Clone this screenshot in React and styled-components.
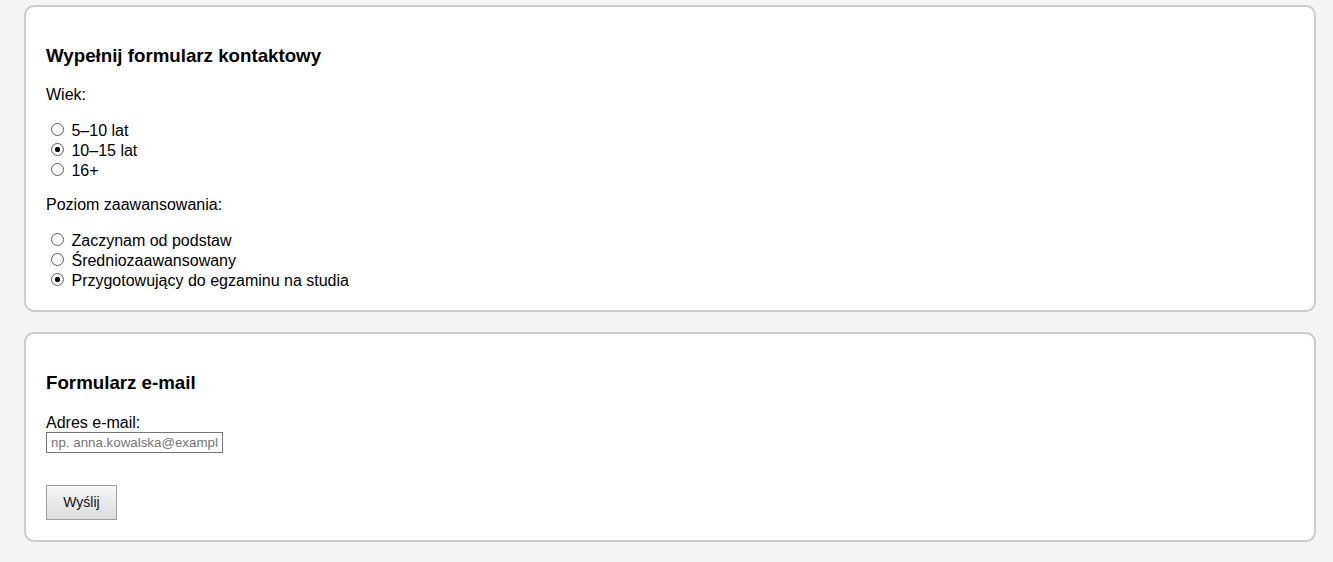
import React from 'react'
import styled, { createGlobalStyle } from 'styled-components'

const Global = createGlobalStyle`
body {
    margin: 0;
    background: #f5f5f5;
    font-family: "Liberation Sans", Arial, sans-serif;
    color: #000;
}
`

const Page = styled.div`
display: flex;
flex-direction: column;
gap: 20px;
padding: 5px 17px 21px 24px;
`

const Card = styled.section`
background: #fff;
border: 2px solid #cccccc;
border-radius: 10px;
padding: 20px;
`

const Heading = styled.h3`
font-size: 18.72px;
font-weight: bold;
margin: 18px 0 19.4px;
`

const Label = styled.p`
font-size: 16px;
margin: 16px 0;
`

const Options = styled.div`
font-size: 16px;
`

const Option = styled.label`
display: block;

input {
    appearance: none;
    box-sizing: border-box;
    width: 13px;
    height: 13px;
    margin: 3px 3px 0 5px;
    border: 1px solid #5a5a5a;
    border-radius: 50%;
    background: #fff;
}

input:checked {
    background: radial-gradient(circle, #111 0 2.4px, #fff 3px);
}
`

const Field = styled.label`
display: block;
font-size: 16px;
margin-bottom: 32px;
`

const Input = styled.input`
display: block;
box-sizing: border-box;
width: 177px;
height: 21px;
padding: 1px 4px;
border: 1px solid #767676;
font-family: "Liberation Sans", Arial, sans-serif;
font-size: 13.33px;

::placeholder {
    color: #8a8a8a;
}
`

const Button = styled.button`
display: block;
box-sizing: border-box;
width: 71px;
height: 35px;
border: 1px solid #a0a0a0;
background: linear-gradient(to bottom, #f7f7f7, #dcdcdc);
font-family: "Liberation Sans", Arial, sans-serif;
font-size: 14px;
color: #111;
`

const RadioGroup = ({ name, options, checked }) => (
    <Options>
        {options.map(opt => (
            <Option key={opt}>
                <input type="radio" name={name} defaultChecked={opt === checked} /> {opt}
            </Option>
        ))}
    </Options>
)

const App = () => {
    return (
        <Page>
            <Global />
            <Card>
                <Heading>Wypełnij formularz kontaktowy</Heading>
                <Label>Wiek:</Label>
                <RadioGroup name="wiek" options={['5–10 lat', '10–15 lat', '16+']} checked="10–15 lat" />
                <Label>Poziom zaawansowania:</Label>
                <RadioGroup
                    name="poziom"
                    options={['Zaczynam od podstaw', 'Średniozaawansowany', 'Przygotowujący do egzaminu na studia']}
                    checked="Przygotowujący do egzaminu na studia"
                />
            </Card>
            <Card>
                <Heading>Formularz e-mail</Heading>
                <Field>
                    Adres e-mail:
                    <Input type="email" placeholder="np. anna.kowalska@example.com" />
                </Field>
                <Button>Wyślij</Button>
            </Card>
        </Page>
    )
}

export default App
